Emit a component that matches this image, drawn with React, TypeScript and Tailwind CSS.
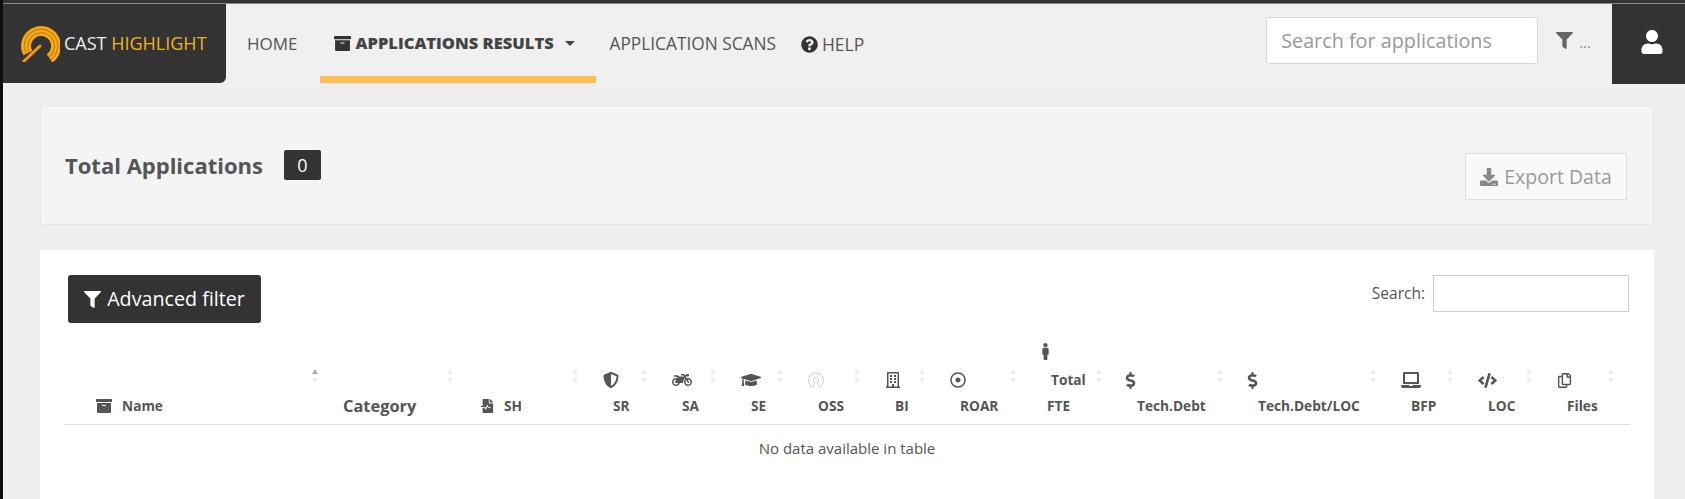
import React from "react";
import {
  FaArchive,
  FaCode,
  FaDollarSign,
  FaDownload,
  FaFileMedicalAlt,
  FaFilter,
  FaGraduationCap,
  FaLaptop,
  FaMale,
  FaMotorcycle,
  FaOsi,
  FaQuestionCircle,
  FaRegBuilding,
  FaRegCopy,
  FaRegDotCircle,
  FaShieldAlt,
  FaUser,
} from "react-icons/fa";

const Logo = () => (
  <svg width="41" height="36" viewBox="0 0 41 36" fill="none" className="shrink-0">
    <path d="M8.8 27A15 15 0 1 1 30.6 32.3" stroke="#b5780f" strokeWidth="10" />
    <g stroke="#f8a811" strokeWidth="2.6">
      <path d="M5.7 28.7A18.5 18.5 0 1 1 32.6 35.2" />
      <path d="M8.8 27A15 15 0 1 1 30.6 32.3" />
      <path d="M11.9 25.4A11.5 11.5 0 1 1 28.6 29.4" />
      <path d="M5 35L21 20" strokeWidth="3" stroke="#f59a0c" strokeLinecap="round" />
    </g>
  </svg>
);

const SortArrows = ({ active }: { active?: boolean }) => (
  <svg width="6" height="14" viewBox="0 0 6 14" className="absolute right-[16px] bottom-[32px]">
    <path d="M3 0L6 5H0Z" fill={active ? "#aaaaaa" : "#ececec"} />
    <path d="M3 14L6 9H0Z" fill="#ececec" />
  </svg>
);

const columns = [
  { label: "SR", width: "w-[69px]", icon: <FaShieldAlt className="text-[16px]" /> },
  { label: "SA", width: "w-[69px]", icon: <FaMotorcycle className="text-[20px]" /> },
  { label: "SE", width: "w-[67px]", icon: <FaGraduationCap className="text-[20px]" /> },
  { label: "OSS", width: "w-[77px]", icon: <FaOsi className="text-[16px] text-[#bbbbbb]" /> },
  { label: "BI", width: "w-[65px]", icon: <FaRegBuilding className="text-[16px]" /> },
  { label: "ROAR", width: "w-[91px]", icon: <FaRegDotCircle className="text-[16px]" /> },
  { label: "Tech.Debt", width: "w-[121px]", icon: <FaDollarSign className="ml-[-5px] text-[17px]" /> },
  { label: "Tech.Debt/LOC", width: "w-[153px]", icon: <FaDollarSign className="ml-[-4px] text-[17px]" /> },
  { label: "BFP", width: "w-[77px]", icon: <FaLaptop className="text-[20px]" /> },
  { label: "LOC", width: "w-[79px]", icon: <FaCode className="text-[19px]" /> },
  { label: "Files", width: "w-[82px]", icon: <FaRegCopy className="text-[15px]" /> },
];

const IconColumn = ({ col }: { col: (typeof columns)[number] }) => (
  <div className={`${col.width} relative shrink-0 pl-[9px]`}>
    <div className="flex h-[20px] items-center text-[#555555]">{col.icon}</div>
    <div className="mt-[7px] ml-[10px] text-[13.7px] leading-[18px] font-bold whitespace-nowrap">{col.label}</div>
    <SortArrows />
  </div>
);

const App = () => {
  return (
    <div className="flex h-[499px] w-full overflow-hidden bg-[#efefef] font-['Open_Sans',sans-serif] text-[#555555]">
      <div className="h-full w-[3px] shrink-0 bg-[#0d0d0d]" />
      <div className="min-w-0 flex-1">
        <div className="h-[4px] border-b border-[#8a8a8a] bg-[#333333]" />

        {/* navbar */}
        <nav className="flex h-[80px] items-center bg-[#f0f0f0] text-[17px]">
          <div className="flex h-[79px] w-[223px] shrink-0 items-center self-start rounded-br-md bg-[#333333] pl-[16px]">
            <Logo />
            <span className="ml-[4px] text-[18px] whitespace-nowrap text-[#eeeeee]">
              CAST <span className="text-[#f2b01e]">HIGHLIGHT</span>
            </span>
          </div>
          <a className="ml-[21px] whitespace-nowrap">HOME</a>
          <a className="ml-[22px] flex h-[79px] w-[276px] items-center self-start border-t-[7px] border-b-[7px] border-t-transparent border-b-[#ffbe55] pl-[14px] text-[16.5px] font-extrabold whitespace-nowrap text-[#444444]">
            <FaArchive className="mr-[5px] text-[17px] text-[#333333]" />
            APPLICATIONS RESULTS
            <span className="ml-[11px] h-0 w-0 border-x-[5px] border-t-[5px] border-x-transparent border-t-[#444444]" />
          </a>
          <a className="ml-[14px] text-[17.3px] whitespace-nowrap">APPLICATION SCANS</a>
          <a className="ml-[25px] flex items-center text-[17.5px] whitespace-nowrap">
            <FaQuestionCircle className="mr-[4px] text-[17px] text-[#333333]" />
            HELP
          </a>
          <input
            placeholder="Search for applications"
            className="mt-[13px] ml-auto h-[47px] w-[272px] self-start rounded-[3px] border border-[#d8d8d8] bg-white px-[14px] text-[19.8px] outline-none placeholder:text-[#999999]"
          />
          <FaFilter className="mt-[-8px] ml-[18px] text-[17px] text-[#666666]" />
          <span className="mt-[-4px] ml-[6px] text-[15px] text-[#888888]">...</span>
          <div className="ml-[21px] flex h-[80px] w-[73px] shrink-0 items-center justify-center bg-[#333333] pb-[4px] pl-[6px]">
            <FaUser className="text-[24px] text-white" />
          </div>
        </nav>

        <div className="mt-[21px] ml-[37px] w-[1614px]">
          {/* summary */}
          <section className="flex h-[120px] items-center justify-between rounded-[3px] border border-[#e6e6e6] bg-[#f4f4f4] pr-[26px] pl-[24px]">
            <div className="flex items-center self-start pt-[44px]">
              <h2 className="text-[22px] leading-[30px] font-bold">Total Applications</h2>
              <span className="ml-[21px] flex h-[30px] w-[37px] items-center justify-center rounded-[2px] bg-[#333333] text-[18px] text-white">
                0
              </span>
            </div>
            <button className="mb-[24px] flex h-[47px] w-[162px] items-center justify-center self-end border border-[#dddddd] bg-[#f9f9f9] text-[19.5px] text-[#999999]">
              <FaDownload className="mr-[6px] text-[18px] text-[#888888]" />
              Export Data
            </button>
          </section>

          {/* table panel */}
          <section className="mt-[25px] h-[249px] bg-white pt-[25px] pr-[25px] pl-[24px]">
            <div className="flex items-start justify-between">
              <button className="ml-[4px] flex h-[48px] w-[193px] items-center justify-center rounded-[3px] bg-[#333333] text-[19.7px] text-white">
                <FaFilter className="mr-[6px] text-[17px]" />
                Advanced filter
              </button>
              <label className="flex items-center text-[15.5px]">
                Search:
                <input className="ml-[8px] h-[37px] w-[196px] border border-[#cccccc] outline-none" />
              </label>
            </div>

            <div className="mt-[23px] flex h-[79px] w-[1566px] items-end border-b border-[#dddddd] pb-[9px] text-[#555555]">
              <div className="relative flex w-[270px] shrink-0 items-center pl-[32px] text-[13.7px] leading-[18px] font-bold">
                <FaArchive className="mr-[10px] text-[16px]" />
                Name
                <SortArrows active />
              </div>
              <div className="relative w-[135px] shrink-0 pl-[9px] text-[16.4px] leading-[18px] font-bold">
                Category
                <SortArrows />
              </div>
              <div className="relative flex w-[125px] shrink-0 items-center pl-[11px] text-[13.7px] leading-[18px] font-bold">
                <FaFileMedicalAlt className="mr-[10px] text-[14px]" />
                SH
                <SortArrows />
              </div>
              {columns.slice(0, 6).map((col) => (
                <IconColumn key={col.label} col={col} />
              ))}
              <div className="relative w-[86px] shrink-0 pl-[9px]">
                <FaMale className="mb-[10px] ml-[-4px] text-[17px]" />
                <div className="ml-[10px] text-[13.7px] leading-[20px] font-bold">Total</div>
                <div className="mt-[7px] ml-[6px] text-[13.7px] leading-[18px] font-bold">FTE</div>
                <SortArrows />
              </div>
              {columns.slice(6).map((col) => (
                <IconColumn key={col.label} col={col} />
              ))}
            </div>
            <p className="mt-[12px] w-[1566px] text-center text-[15px]">No data available in table</p>
          </section>
        </div>
      </div>
    </div>
  );
};

export default App;
